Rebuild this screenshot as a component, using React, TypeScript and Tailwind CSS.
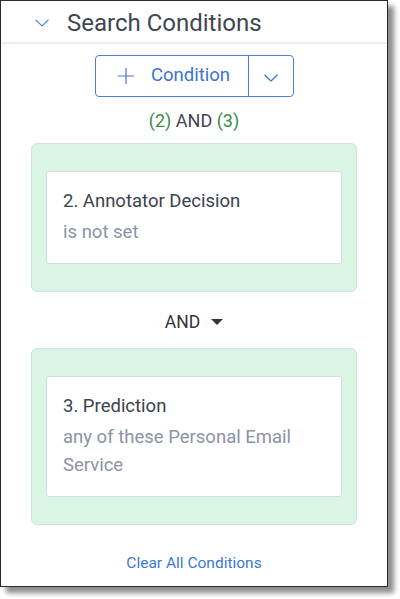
import { Plus } from "lucide-react";

function Chevron({ className }: { className?: string }) {
  return (
    <svg viewBox="0 0 16 9" fill="none" stroke="currentColor" strokeWidth={1.4} strokeLinecap="round" strokeLinejoin="round" className={className}>
      <path d="M1 1.2 8 7.8 15 1.2" />
    </svg>
  );
}

function ConditionCard({ title, detail }: { title: string; detail: string }) {
  return (
    <div className="rounded-[6px] border border-[#cfe3e0] bg-[#d9f5e4] px-[14px] py-[27px]">
      <div className="rounded-[3px] border border-[#d6dce6] bg-white px-[16px] py-[17px]">
        <div className="text-[18.5px] leading-[25px] text-[#3c424d]">{title}</div>
        <div className="mt-[4px] text-[18.5px] leading-[28px] text-[#8b93a4]">{detail}</div>
      </div>
    </div>
  );
}

export default function App() {
  return (
    <div className="h-[599px] w-[400px] bg-white" style={{ fontFamily: "Roboto, 'Liberation Sans', sans-serif" }}>
      <div className="flex h-[587px] w-[388px] flex-col border border-[#2a2a2a] bg-white shadow-[6px_6px_5px_rgba(0,0,0,0.45)]">
        <div className="flex h-[43px] shrink-0 items-center border-b-2 border-[#e8eef5] pl-[34px] pt-[2px]">
          <Chevron className="h-[8px] w-[14px] text-[#4a7fdc]" />
          <span className="ml-[18px] text-[24px] leading-none text-[#41464f]">Search Conditions</span>
        </div>

        <div className="mt-[11px] flex justify-center">
          <div className="flex h-[42px] rounded-[4px] border-[1.5px] border-[#4a7fdc] text-[#3b73d9]">
            <button className="flex w-[153px] items-center justify-center gap-[12px] border-r-[1.5px] border-[#4a7fdc]">
              <Plus className="h-[26px] w-[26px]" strokeWidth={1.1} />
              <span className="text-[18.5px]">Condition</span>
            </button>
            <button className="flex w-[44px] items-center justify-center pt-[3px]">
              <Chevron className="h-[8px] w-[16px]" />
            </button>
          </div>
        </div>

        <div className="mt-[12px] text-center text-[18px] leading-[24px] text-[#41464f]">
          <span className="text-[#3d8a4e]">(2)</span> AND <span className="text-[#3d8a4e]">(3)</span>
        </div>

        <div className="mx-[30px] mt-[10px]">
          <ConditionCard title="2. Annotator Decision" detail="is not set" />
        </div>

        <div className="mt-[18px] flex items-center justify-center gap-[11px] text-[17.5px] leading-[24px] text-[#30343b]">
          <span>AND</span>
          <span className="h-0 w-0 border-x-[6px] border-t-[6px] border-x-transparent border-t-[#30343b]" />
        </div>

        <div className="mx-[30px] mt-[14px]">
          <ConditionCard title="3. Prediction" detail="any of these Personal Email Service" />
        </div>

        <div className="mt-[28px] text-center text-[15.5px] leading-[20px] text-[#3b78d8]">Clear All Conditions</div>
      </div>
    </div>
  );
}
